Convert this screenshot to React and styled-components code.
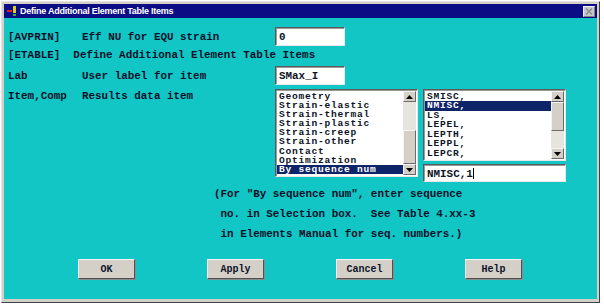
import React from 'react';
import styled, { createGlobalStyle } from 'styled-components';

const GlobalStyle = createGlobalStyle`
  html, body {
    margin: 0;
    padding: 0;
    background: #ffffff;
  }
  * { box-sizing: border-box; }
`;

const mono = `"Liberation Mono", "DejaVu Sans Mono", monospace`;

const Window = styled.div`
  margin: 1px 0 0 1px;
  width: 599px;
  height: 302px;
  display: flex;
  flex-direction: column;
  background: #d4d0c8;
  border: 1px solid;
  border-color: #e4e4e4 #404040 #404040 #e4e4e4;
  padding: 2px 2px 3px 2px;
`;

const TitleBar = styled.div`
  height: 14px;
  display: flex;
  align-items: center;
  background: #0c0c84;
  padding: 0 2px 0 3px;
`;

const TitleText = styled.span`
  flex: 1;
  margin-left: 3px;
  color: #ffffff;
  font-family: "Liberation Sans", Arial, sans-serif;
  font-weight: bold;
  font-size: 9px;
  letter-spacing: -0.25px;
  line-height: 14px;
`;

const CloseButton = styled.div`
  width: 12px;
  height: 11px;
  display: flex;
  align-items: center;
  justify-content: center;
  background: #c8c8c8;
  border: 1px solid;
  border-color: #f0f0f0 #808080 #808080 #f0f0f0;
`;

const Body = styled.div`
  flex: 1;
  background: #12c6c6;
  padding: 9px 0 0 4px;
  font-family: ${mono};
  font-weight: bold;
  font-size: 10.9px;
  color: #0a1028;
`;

const Row = styled.div`
  display: grid;
  grid-template-columns: 74px 193px auto;
  align-items: ${p => (p.top ? 'start' : 'center')};
  margin-top: ${p => p.gap || 0}px;
  min-height: ${p => p.h || 14}px;
`;

const Text = styled.span`
  white-space: pre;
  line-height: 12px;
  margin-top: ${p => p.mt || 0}px;
`;

const Sunken = styled.div`
  background: #ffffff;
  border: 1px solid;
  border-color: #5a5a5a #e8e8e8 #e8e8e8 #5a5a5a;
  box-shadow: inset 1px 1px 0 #9a9a9a;
`;

const Input = styled(Sunken)`
  width: ${p => p.w || 70}px;
  height: ${p => p.h || 19}px;
  padding: 3px 0 0 3px;
  line-height: 12px;
  white-space: pre;
  color: #0e1428;
`;

const Caret = styled.span`
  display: inline-block;
  width: 1px;
  height: 11px;
  background: #000;
  vertical-align: -2px;
`;

const Selectors = styled.div`
  display: flex;
  gap: 5px;
`;

const RightCol = styled.div`
  display: flex;
  flex-direction: column;
  gap: 3px;
`;

const ListBox = styled(Sunken)`
  width: 143px;
  height: ${p => p.h}px;
  display: flex;
  padding: 1px;
`;

const Items = styled.div`
  flex: 1;
  padding-top: 0.5px;
  overflow: hidden;
  font-size: 9.6px;
  letter-spacing: 0.75px;
`;

const Item = styled.div`
  height: ${p => p.lh}px;
  line-height: ${p => p.lh}px;
  padding-left: 2px;
  white-space: pre;
  background: ${p => (p.selected ? '#0e2468' : 'transparent')};
  color: ${p => (p.selected ? '#ffffff' : '#0e1428')};
`;

const ScrollBar = styled.div`
  width: 13px;
  display: flex;
  flex-direction: column;
  background: #e6e4df;
`;

const ArrowButton = styled.div`
  height: 11px;
  display: flex;
  align-items: center;
  justify-content: center;
  background: #d4d0c8;
  border: 1px solid;
  border-color: #f4f4f4 #6a6a6a #6a6a6a #f4f4f4;
`;

const Thumb = styled.div`
  height: ${p => p.h}px;
  background: #d4d0c8;
  border: 1px solid;
  border-color: #f4f4f4 #6a6a6a #6a6a6a #f4f4f4;
`;

const Track = styled.div`
  flex: 1;
`;

const Caption = styled.div`
  margin: 2px 0 0 206px;
`;

const CaptionLine = styled.div`
  white-space: pre;
  line-height: 20px;
  height: 20px;
`;

const ButtonRow = styled.div`
  display: flex;
  gap: 72px;
  margin: 15px 0 0 70px;
`;

const Button = styled.div`
  width: 57px;
  height: 20px;
  display: flex;
  align-items: center;
  justify-content: center;
  background: #d4d0c8;
  border: 1px solid;
  border-color: #f4f4f4 #505050 #505050 #f4f4f4;
  box-shadow: 1px 1px 0 #8a8a8a;
  font-size: 10px;
  color: #0e1428;
`;

const Arrow = ({ up }) => (
  <svg width="7" height="4" viewBox="0 0 7 4">
    <path d={up ? 'M0 4 L3.5 0 L7 4 Z' : 'M0 0 L3.5 4 L7 0 Z'} fill="#000" />
  </svg>
);

const Scroll = ({ thumbAt, thumbH }) => (
  <ScrollBar>
    <ArrowButton><Arrow up /></ArrowButton>
    {thumbAt === 'top' && <Thumb h={thumbH} />}
    <Track />
    {thumbAt === 'bottom' && <Thumb h={thumbH} />}
    <ArrowButton><Arrow /></ArrowButton>
  </ScrollBar>
);

const categories = [
  'Geometry', 'Strain-elastic', 'Strain-thermal', 'Strain-plastic',
  'Strain-creep', 'Strain-other', 'Contact', 'Optimization', 'By sequence num',
];

const components = ['SMISC,', 'NMISC,', 'LS,', 'LEPEL,', 'LEPTH,', 'LEPPL,', 'LEPCR,'];

const App = () => (
  <>
    <GlobalStyle />
    <Window>
      <TitleBar>
        <svg width="10" height="10" viewBox="0 0 10 10">
          <rect x="0" y="4" width="5" height="2" fill="#e02020" />
          <rect x="6" y="0" width="3" height="7" fill="#d8d020" />
          <rect x="6" y="8" width="3" height="2" fill="#30b030" />
        </svg>
        <TitleText>Define Additional Element Table Items</TitleText>
        <CloseButton>
          <svg width="8" height="7" viewBox="0 0 8 7">
            <path d="M1 0.5 L7 6.5 M7 0.5 L1 6.5" stroke="#8a8a8a" strokeWidth="1.3" />
          </svg>
        </CloseButton>
      </TitleBar>
      <Body>
        <Row h={19}>
          <Text>[AVPRIN]</Text>
          <Text>Eff NU for EQU strain</Text>
          <Input>0</Input>
        </Row>
        <Row gap={2}>
          <Text>{'[ETABLE]  Define Additional Element Table Items'}</Text>
        </Row>
        <Row gap={4} h={19}>
          <Text>Lab</Text>
          <Text>User label for item</Text>
          <Input>SMax_I</Input>
        </Row>
        <Row gap={4} top>
          <Text mt={1}>Item,Comp</Text>
          <Text mt={1}>Results data item</Text>
          <Selectors>
            <ListBox h={88}>
              <Items>
                {categories.map(c => (
                  <Item key={c} lh={9.2} selected={c === 'By sequence num'}>{c}</Item>
                ))}
              </Items>
              <Scroll thumbAt="bottom" thumbH={34} />
            </ListBox>
            <RightCol>
              <ListBox h={72}>
                <Items>
                  {components.map(c => (
                    <Item key={c} lh={9.6} selected={c === 'NMISC,'}>{c}</Item>
                  ))}
                </Items>
                <Scroll thumbAt="top" thumbH={29} />
              </ListBox>
              <Input w={143} h={18}>NMISC,1<Caret /></Input>
            </RightCol>
          </Selectors>
        </Row>
        <Caption>
          <CaptionLine>{'(For "By sequence num", enter sequence'}</CaptionLine>
          <CaptionLine>{' no. in Selection box.  See Table 4.xx-3'}</CaptionLine>
          <CaptionLine>{' in Elements Manual for seq. numbers.)'}</CaptionLine>
        </Caption>
        <ButtonRow>
          <Button>OK</Button>
          <Button>Apply</Button>
          <Button>Cancel</Button>
          <Button>Help</Button>
        </ButtonRow>
      </Body>
    </Window>
  </>
);

export default App;
